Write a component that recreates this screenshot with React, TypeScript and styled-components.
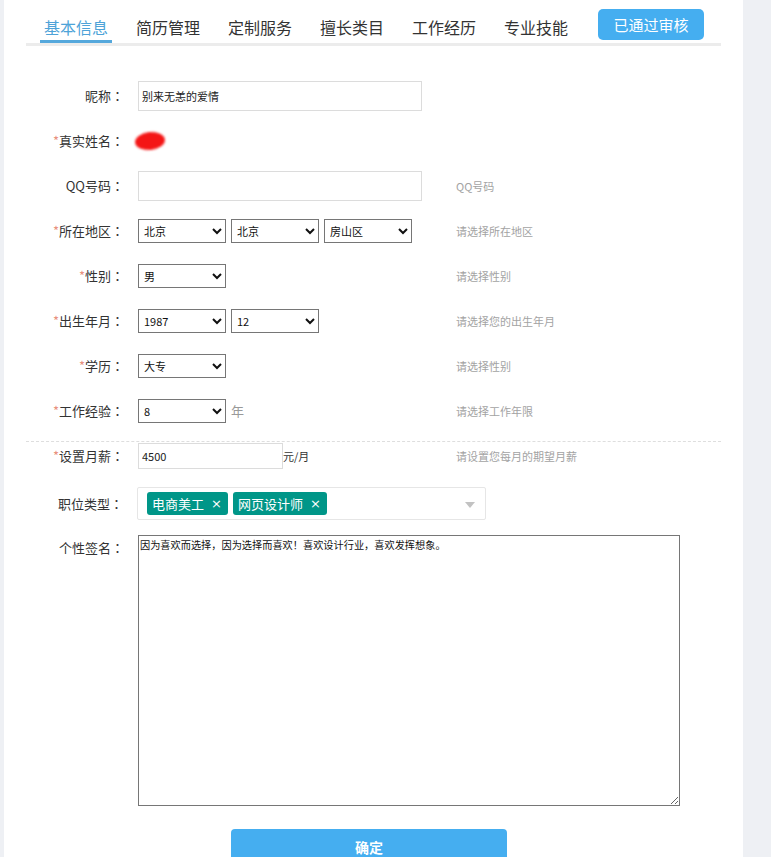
import styled, { createGlobalStyle } from 'styled-components'

const GlobalStyle = createGlobalStyle`
  html, body {
    margin: 0;
    padding: 0;
    background: #eef0f4;
  }
  body {
    font-family: 'Noto Sans CJK SC', 'Noto Sans', sans-serif;
    color: #333;
  }
  * {
    box-sizing: border-box;
  }
`

const tabs = ['基本信息', '简历管理', '定制服务', '擅长类目', '工作经历', '专业技能']

const Option = ({ items, value }: { items: string[]; value: string }) => (
  <Select defaultValue={value}>
    {items.map((item) => (
      <option key={item} value={item}>
        {item}
      </option>
    ))}
  </Select>
)

const FieldLabel = ({ text, required }: { text: string; required?: boolean }) => (
  <Label>
    {required && <Star>*</Star>}
    {text}
    <Colon>：</Colon>
  </Label>
)

const App = () => {
  return (
    <Page>
      <GlobalStyle />
      <Panel>
        <TabBar>
          {tabs.map((tab, i) => (
            <Tab key={tab} $active={i === 0}>
              {tab}
            </Tab>
          ))}
          <StatusButton>已通过审核</StatusButton>
        </TabBar>

        <Form>
          <Row>
            <FieldLabel text="昵称" />
            <Field>
              <TextInput defaultValue="别来无恙的爱情" />
            </Field>
          </Row>
          <Row>
            <FieldLabel text="真实姓名" required />
            <Field>
              <Blot />
            </Field>
          </Row>
          <Row>
            <FieldLabel text="QQ号码" />
            <Field>
              <TextInput />
            </Field>
            <Hint>QQ号码</Hint>
          </Row>
          <Row>
            <FieldLabel text="所在地区" required />
            <Field>
              <Option items={['北京']} value="北京" />
              <Option items={['北京']} value="北京" />
              <Option items={['房山区']} value="房山区" />
            </Field>
            <Hint>请选择所在地区</Hint>
          </Row>
          <Row>
            <FieldLabel text="性别" required />
            <Field>
              <Option items={['男', '女']} value="男" />
            </Field>
            <Hint>请选择性别</Hint>
          </Row>
          <Row>
            <FieldLabel text="出生年月" required />
            <Field>
              <Option items={['1987']} value="1987" />
              <Option items={['12']} value="12" />
            </Field>
            <Hint>请选择您的出生年月</Hint>
          </Row>
          <Row>
            <FieldLabel text="学历" required />
            <Field>
              <Option items={['大专']} value="大专" />
            </Field>
            <Hint>请选择性别</Hint>
          </Row>
          <Row>
            <FieldLabel text="工作经验" required />
            <Field>
              <Option items={['8']} value="8" />
              <Unit $muted>年</Unit>
            </Field>
            <Hint>请选择工作年限</Hint>
          </Row>
          <SalaryRow>
            <FieldLabel text="设置月薪" required />
            <Field $tight>
              <SalaryInput defaultValue="4500" />
              <Unit>元/月</Unit>
            </Field>
            <Hint>请设置您每月的期望月薪</Hint>
          </SalaryRow>
          <TagRow>
            <FieldLabel text="职位类型" />
            <TagBox>
              <TagItem>
                电商美工<TagClose>×</TagClose>
              </TagItem>
              <TagItem>
                网页设计师<TagClose>×</TagClose>
              </TagItem>
              <Caret />
            </TagBox>
          </TagRow>
          <SignRow>
            <FieldLabel text="个性签名" />
            <SignArea defaultValue="因为喜欢而选择，因为选择而喜欢！喜欢设计行业，喜欢发挥想象。" />
          </SignRow>
          <SubmitRow>
            <SubmitButton>确定</SubmitButton>
          </SubmitRow>
        </Form>
      </Panel>
    </Page>
  )
}

export default App

const Page = styled.div`
  display: flex;
  padding-left: 4px;
  min-height: 857px;
`

const Panel = styled.div`
  width: 739px;
  min-height: 857px;
  background: #fff;
  padding: 0 22px;
`

const TabBar = styled.div`
  display: flex;
  align-items: flex-end;
  height: 46px;
  padding: 8px 0 0 14px;
  border-bottom: 3px solid #ececec;
`

const Tab = styled.div<{ $active?: boolean }>`
  font-size: 16px;
  line-height: 22px;
  padding: 0 4px 2px;
  margin-right: 20px;
  color: ${(p) => (p.$active ? '#4ea3d8' : '#333')};
  border-bottom: 3px solid ${(p) => (p.$active ? '#55a8dc' : 'transparent')};
  white-space: nowrap;
`

const StatusButton = styled.button`
  align-self: flex-start;
  margin: 1px 0 0 6px;
  width: 106px;
  height: 31px;
  border: none;
  border-radius: 5px;
  background: #45aef0;
  color: #fff;
  font-family: inherit;
  font-size: 15px;
  line-height: 31px;
  padding: 0;
`

const Form = styled.div`
  padding-top: 27px;
`

const Row = styled.div`
  display: grid;
  grid-template-columns: 112px 318px 1fr;
  align-items: center;
  height: 45px;
`

const Label = styled.div`
  font-size: 13px;
  line-height: 20px;
  text-align: right;
  padding-right: 14px;
  color: #333;
  white-space: nowrap;
`

const Colon = styled.span`
  font-family: 'Noto Sans CJK TC', 'Noto Sans CJK SC', sans-serif;
`

const Star = styled.span`
  color: #e8907e;
`

const Field = styled.div<{ $tight?: boolean }>`
  display: flex;
  align-items: center;
  gap: ${(p) => (p.$tight ? '0' : '5px')};
`

const Hint = styled.div`
  font-size: 11px;
  line-height: 16px;
  color: #a3a3a3;
  white-space: nowrap;
`

const TextInput = styled.input`
  width: 284px;
  height: 30px;
  border: 1px solid #dcdcdc;
  padding: 0 3px;
  font-family: inherit;
  font-size: 11px;
  color: #222;
  outline: none;
`

const Select = styled.select`
  width: 88px;
  height: 24px;
  border: 1px solid #767676;
  border-radius: 0;
  background: #fff;
  font-family: inherit;
  font-size: 11px;
  color: #111;
  padding: 0 0 0 1px;
`

const Unit = styled.span<{ $muted?: boolean }>`
  font-size: ${(p) => (p.$muted ? '13px' : '11px')};
  color: ${(p) => (p.$muted ? '#999' : '#333')};
  line-height: 16px;
`

const Blot = styled.span`
  display: block;
  width: 30px;
  height: 18px;
  margin-left: -3px;
  border-radius: 50%;
  background: #f41515;
  filter: blur(1.2px);
  transform: rotate(-6deg);
`

const SalaryRow = styled(Row)`
  height: 36px;
  margin-top: 8px;
  padding-bottom: 8px;
  border-top: 1px dashed #dedede;
`

const SalaryInput = styled(TextInput)`
  width: 145px;
  height: 26px;
`

const TagRow = styled.div`
  display: grid;
  grid-template-columns: 111px 349px;
  align-items: center;
  margin-top: 10px;
`

const TagBox = styled.div`
  position: relative;
  display: flex;
  align-items: center;
  gap: 5px;
  height: 33px;
  padding: 0 9px;
  border: 1px solid #e6e6e6;
  border-radius: 2px;
`

const TagItem = styled.span`
  display: inline-flex;
  align-items: center;
  height: 23px;
  padding: 0 6px 0 5px;
  background: #009688;
  color: #fff;
  border-radius: 3px;
  font-size: 13px;
  line-height: 23px;
  white-space: nowrap;
`

const TagClose = styled.span`
  margin-left: 7px;
  font-size: 13px;
  font-family: 'DejaVu Sans', sans-serif;
`

const Caret = styled.span`
  position: absolute;
  right: 10px;
  top: 14px;
  width: 0;
  height: 0;
  border-left: 5px solid transparent;
  border-right: 5px solid transparent;
  border-top: 6px solid #c2c2c2;
`

const SignRow = styled.div`
  display: grid;
  grid-template-columns: 112px 542px;
  align-items: start;
  margin-top: 15px;

  ${Label} {
    padding-top: 3px;
  }
`

const SignArea = styled.textarea`
  width: 542px;
  height: 271px;
  border: 1px solid #767676;
  padding: 1px 1px;
  font-family: inherit;
  font-size: 10.2px;
  line-height: 16px;
  color: #111;
  resize: both;
  outline: none;
`

const SubmitRow = styled.div`
  display: flex;
  padding: 23px 0 0 205px;
`

const SubmitButton = styled.button`
  width: 276px;
  height: 36px;
  border: none;
  border-radius: 4px;
  background: #45aef0;
  color: #fff;
  font-family: inherit;
  font-size: 14px;
  font-weight: bold;
`
